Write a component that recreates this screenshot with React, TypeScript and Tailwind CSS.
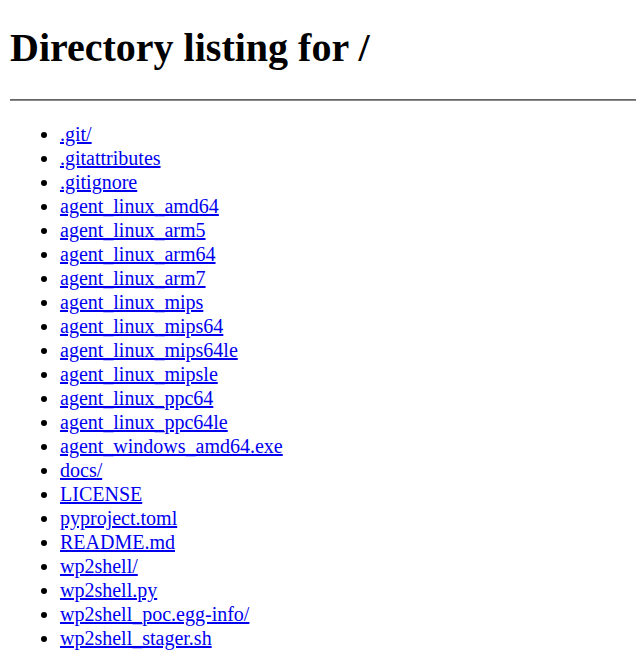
import React from "react";

const files = [
  ".git/",
  ".gitattributes",
  ".gitignore",
  "agent_linux_amd64",
  "agent_linux_arm5",
  "agent_linux_arm64",
  "agent_linux_arm7",
  "agent_linux_mips",
  "agent_linux_mips64",
  "agent_linux_mips64le",
  "agent_linux_mipsle",
  "agent_linux_ppc64",
  "agent_linux_ppc64le",
  "agent_windows_amd64.exe",
  "docs/",
  "LICENSE",
  "pyproject.toml",
  "README.md",
  "wp2shell/",
  "wp2shell.py",
  "wp2shell_poc.egg-info/",
  "wp2shell_stager.sh",
];

const App = () => {
  return (
    <div className="min-h-screen overflow-hidden bg-white pl-[10px] pt-[25px] font-['Liberation_Serif','Times_New_Roman',serif] text-black">
      <h1 className="text-[40px] font-bold leading-[46px]">Directory listing for /</h1>
      <hr className="mt-[28px] h-[2px] border-0 border-t border-b border-t-[#666666] border-b-[#8a8a8a]" />
      <ul className="mt-[21px] list-disc pl-[50px] text-[20px] leading-[24px]">
        {files.map((name) => (
          <li key={name}>
            <a href={name} className="text-[#0000ee] underline">
              {name}
            </a>
          </li>
        ))}
      </ul>
    </div>
  );
};

export default App;
